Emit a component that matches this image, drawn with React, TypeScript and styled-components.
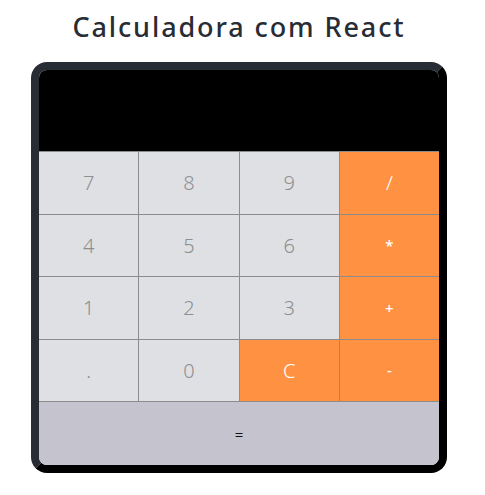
import React from "react";
import styled, { createGlobalStyle } from "styled-components";

const Global = createGlobalStyle`
  html, body { margin: 0; padding: 0; background: #ffffff; }
  body { font-family: "Noto Sans", "Open Sans", sans-serif; }
`;

const Page = styled.div`
  display: flex;
  flex-direction: column;
  align-items: center;
  width: 478px;
  padding-top: 10px;
`;

const Title = styled.h1`
  margin: 0;
  font-family: "Noto Sans", sans-serif;
  font-weight: 500;
  font-size: 27px;
  line-height: 34px;
  color: #282c34;
  letter-spacing: 1.9px;
`;

const Calculator = styled.div`
  margin-top: 18px;
  width: 400px;
  border-width: 8px;
  border-style: solid;
  border-color: #282c34 #000000 #000000 #282c34;
  border-radius: 16px;
  overflow: hidden;
  display: flex;
  flex-direction: column;
`;

const Display = styled.div`
  height: 81px;
  background: #000000;
`;

const Keypad = styled.div`
  display: grid;
  grid-template-columns: repeat(4, 1fr);
  grid-template-rows: repeat(4, 1fr);
  gap: 1px;
  padding: 1px 0;
  height: 251px;
  box-sizing: border-box;
  background: #8c8c8c;
`;

const Key = styled.button<{ $op?: boolean; $small?: boolean }>`
  border: none;
  margin: 0;
  padding: 0;
  font-family: "Noto Sans", sans-serif;
  font-weight: ${(p) => (p.$small ? 500 : 300)};
  font-size: ${(p) => (p.$small ? "15px" : "20px")};
  color: ${(p) => (p.$op ? "#ffffff" : "#8e8e8e")};
  background: ${(p) => (p.$op ? "#ff9142" : "#dfe0e4")};
  display: flex;
  align-items: center;
  justify-content: center;
`;

const Equals = styled.button`
  height: 63px;
  border: none;
  margin: 0;
  padding: 0;
  background: #c5c3cd;
  color: #111111;
  font-family: "Noto Sans", sans-serif;
  font-size: 15px;
`;

const keys: { label: string; op?: boolean; small?: boolean }[] = [
  { label: "7" }, { label: "8" }, { label: "9" }, { label: "/", op: true },
  { label: "4" }, { label: "5" }, { label: "6" }, { label: "*", op: true, small: true },
  { label: "1" }, { label: "2" }, { label: "3" }, { label: "+", op: true, small: true },
  { label: "." }, { label: "0" }, { label: "C", op: true }, { label: "-", op: true, small: true },
];

export default function App() {
  return (
    <>
      <Global />
      <Page>
        <Title>Calculadora com React</Title>
        <Calculator>
          <Display />
          <Keypad>
            {keys.map((k) => (
              <Key key={k.label} $op={k.op} $small={k.small}>
                {k.label}
              </Key>
            ))}
          </Keypad>
          <Equals>=</Equals>
        </Calculator>
      </Page>
    </>
  );
}
